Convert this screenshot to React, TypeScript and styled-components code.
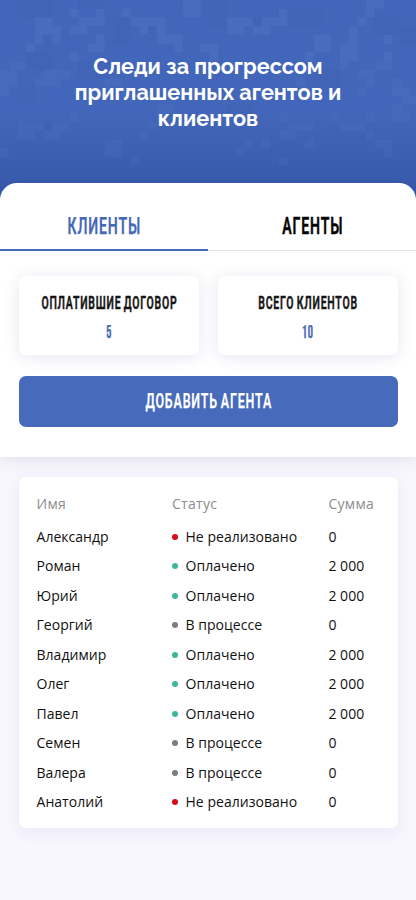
import React from "react";
import styled, { createGlobalStyle } from "styled-components";

const GlobalStyle = createGlobalStyle`
  *, *::before, *::after { box-sizing: border-box; }
  body { margin: 0; background: #f8f7ff; }
`;

const Page = styled.div`
  min-height: 900px;
  overflow: hidden;
  background: #f8f7ff;
  font-family: "Open Sans", "Noto Sans", sans-serif;
  color: #151515;
`;

const Hero = styled.header`
  position: relative;
  height: 205px;
  padding-top: 54px;
  background: linear-gradient(#4266b9 0%, #4266b9 55%, #3e60b2 74%, #3456a6 100%);
`;

const Pattern = styled.svg`
  position: absolute;
  inset: 0;
  width: 100%;
  height: 205px;
`;

const Title = styled.h1`
  position: relative;
  margin: 0;
  display: flex;
  flex-direction: column;
  align-items: center;
  color: #fff;
  font: 700 21.6px/26px Raleway, Lato, sans-serif;
  white-space: nowrap;
`;

const Panel = styled.main`
  position: relative;
  height: 273.5px;
  margin-top: -22px;
  background: #fff;
  border-radius: 17px 17px 0 0;
  box-shadow: 0 5px 14px rgba(50, 50, 90, 0.09);
`;

const Tabs = styled.nav`
  display: grid;
  grid-template-columns: 1fr 1fr;
  height: 68px;
`;

const Tab = styled.button<{ $active?: boolean }>`
  display: flex;
  align-items: center;
  justify-content: center;
  padding: 21px 0 0;
  border: 0;
  border-bottom: ${(p) => (p.$active ? "2px solid #4668b8" : "1px solid #e1e3ea")};
  background: none;
  color: ${(p) => (p.$active ? "#4668b8" : "#050505")};
`;

const Condensed = styled.span<{ $size: number; $scale: number; $stroke?: number }>`
  display: block;
  margin-right: -1px;
  font: 600 ${(p) => p.$size}px/18px "Bebas Neue", Roboto, sans-serif;
  letter-spacing: 1.4px;
  white-space: nowrap;
  transform: scaleX(${(p) => p.$scale});
  -webkit-text-stroke: ${(p) => p.$stroke ?? 0.25}px currentColor;
`;

const Stats = styled.section`
  display: grid;
  grid-template-columns: repeat(2, minmax(0, 1fr));
  gap: 19px;
  padding: 25px 18.5px 0;
`;

const StatCard = styled.div`
  height: 79px;
  display: flex;
  flex-direction: column;
  align-items: center;
  padding-top: 19px;
  gap: 11px;
  border-radius: 7px;
  background: #fff;
  box-shadow: 0 2px 16px rgba(66, 88, 155, 0.14);
`;

const StatValue = styled.div`
  color: #4668b8;
`;

const AddButton = styled.button`
  display: flex;
  align-items: center;
  justify-content: center;
  width: 379px;
  height: 51px;
  margin: 21px auto 0;
  border: 0;
  border-radius: 7px;
  background: #476abb;
  color: #fff;
`;

const TableCard = styled.section`
  height: 351px;
  margin: 20.5px 18.5px 0;
  padding: 12px 18px 0;
  border-radius: 7px;
  background: #fff;
  box-shadow: 0 4px 16px rgba(60, 60, 120, 0.08);
`;

const Row = styled.div<{ $head?: boolean }>`
  display: grid;
  grid-template-columns: 135.5px 156.4px 1fr;
  align-items: center;
  height: ${(p) => (p.$head ? 30 : 29.53)}px;
  margin-bottom: ${(p) => (p.$head ? 2.8 : 0)}px;
  font-size: 14px;
  line-height: 20px;
  letter-spacing: ${(p) => (p.$head ? 0.3 : 0.03)}px;
  color: ${(p) => (p.$head ? "#8c8c8c" : "#111")};
  white-space: nowrap;
`;

const TableBody = styled.div`
  display: flex;
  flex-direction: column;
`;

const Status = styled.div`
  display: flex;
  align-items: center;
  gap: 7.5px;
`;

const Dot = styled.i<{ $color: string }>`
  width: 6px;
  height: 6px;
  border-radius: 50%;
  background: ${(p) => p.$color};
`;

const CELL = 8.72;

// Pixel mosaic: row -> [first column, number of columns]
const mosaic: [number, [number, number][]][] = [
  [0, [[21, 2], [42, 2]]],
  [1, [[8, 1], [11, 1], [14, 1], [21, 2], [32, 1], [42, 1]]],
  [2, [[4, 2], [9, 3], [15, 4], [26, 3], [30, 3], [41, 1]]],
  [3, [[4, 3], [8, 2], [16, 1], [18, 1], [26, 2], [29, 2], [40, 1]]],
  [4, [[4, 1], [6, 1], [11, 1], [18, 3], [36, 2], [40, 1], [44, 1]]],
  [5, [[3, 1], [10, 2], [20, 1], [23, 2], [36, 2], [39, 2]]],
  [6, [[8, 1], [24, 1], [35, 1], [39, 2], [44, 1]]],
  [7, [[1, 2], [39, 1], [43, 2]]],
  [8, [[0, 2], [5, 3], [41, 2]]],
  [9, [[0, 2], [4, 3], [12, 2], [34, 1], [42, 1], [45, 1]]],
  [10, [[0, 1], [14, 1], [41, 1], [45, 2]]],
  [11, [[46, 2]]],
  [12, [[18, 2], [45, 1]]],
  [13, [[8, 1], [18, 1], [32, 1], [38, 1], [42, 1], [45, 2]]],
  [14, [[2, 3], [6, 2], [17, 1], [33, 3], [39, 3]]],
  [15, [[2, 2], [5, 2], [16, 1], [32, 2], [42, 1]]],
  [16, [[12, 2], [28, 1], [30, 1], [35, 1], [43, 2]]],
  [17, [[0, 1], [12, 2], [27, 1], [44, 1]]],
  [18, [[15, 1], [32, 1]]],
];

const shade: [number, number, number, number][] = [
  [2, 0, 4, 2], [9, 0, 3, 1], [17, 3, 1, 1], [13, 2, 2, 3], [5, 4, 1, 1],
  [24, 0, 2, 3], [33, 1, 4, 2], [43, 2, 3, 2], [29, 2, 1, 1], [3, 6, 3, 2],
  [9, 7, 4, 2], [5, 14, 1, 1], [36, 8, 3, 2], [41, 15, 1, 1], [26, 12, 3, 2],
  [46, 3, 2, 2], [2, 10, 2, 2],
];

function Mosaic() {
  return (
    <Pattern aria-hidden="true">
      {shade.map(([x, y, w, h], i) => (
        <rect key={i} x={x * CELL} y={y * CELL} width={w * CELL} height={h * CELL} fill="#3a5aae" opacity=".12" />
      ))}
      {mosaic.map(([row, runs]) =>
        runs.map(([col, count]) => (
          <rect
            key={`${row}-${col}`}
            x={col * CELL}
            y={row * CELL}
            width={count * CELL}
            height={CELL}
            fill="#5e87d4"
            opacity={row < 7 ? 0.23 : row < 13 ? 0.17 : 0.12}
          />
        )),
      )}
    </Pattern>
  );
}

type State = "failed" | "paid" | "pending";

const states: Record<State, { label: string; color: string }> = {
  failed: { label: "Не реализовано", color: "#d50b18" },
  paid: { label: "Оплачено", color: "#3fb89a" },
  pending: { label: "В процессе", color: "#7d7d7d" },
};

const clients: [string, State, string][] = [
  ["Александр", "failed", "0"],
  ["Роман", "paid", "2 000"],
  ["Юрий", "paid", "2 000"],
  ["Георгий", "pending", "0"],
  ["Владимир", "paid", "2 000"],
  ["Олег", "paid", "2 000"],
  ["Павел", "paid", "2 000"],
  ["Семен", "pending", "0"],
  ["Валера", "pending", "0"],
  ["Анатолий", "failed", "0"],
];

export default function App() {
  return (
    <Page>
      <GlobalStyle />
      <Hero>
        <Mosaic />
        <Title>
          <span>Следи за прогрессом</span>
          <span>приглашенных агентов и</span>
          <span>клиентов</span>
        </Title>
      </Hero>
      <Panel>
        <Tabs>
          <Tab $active><Condensed $size={23.5} $scale={0.6}>КЛИЕНТЫ</Condensed></Tab>
          <Tab><Condensed $size={23.5} $scale={0.6} $stroke={0.5}>АГЕНТЫ</Condensed></Tab>
        </Tabs>
        <Stats>
          <StatCard>
            <Condensed $size={18.5} $scale={0.565} $stroke={0.5}>ОПЛАТИВШИЕ ДОГОВОР</Condensed>
            <StatValue><Condensed $size={18.5} $scale={0.7}>5</Condensed></StatValue>
          </StatCard>
          <StatCard>
            <Condensed $size={18.5} $scale={0.565} $stroke={0.5}>ВСЕГО КЛИЕНТОВ</Condensed>
            <StatValue><Condensed $size={18.5} $scale={0.7}>10</Condensed></StatValue>
          </StatCard>
        </Stats>
        <AddButton><Condensed $size={21} $scale={0.593}>ДОБАВИТЬ АГЕНТА</Condensed></AddButton>
      </Panel>
      <TableCard>
        <Row $head><span>Имя</span><span>Статус</span><span>Сумма</span></Row>
        <TableBody>
          {clients.map(([name, state, sum]) => (
            <Row key={name}>
              <span>{name}</span>
              <Status><Dot $color={states[state].color} />{states[state].label}</Status>
              <span>{sum}</span>
            </Row>
          ))}
        </TableBody>
      </TableCard>
    </Page>
  );
}
